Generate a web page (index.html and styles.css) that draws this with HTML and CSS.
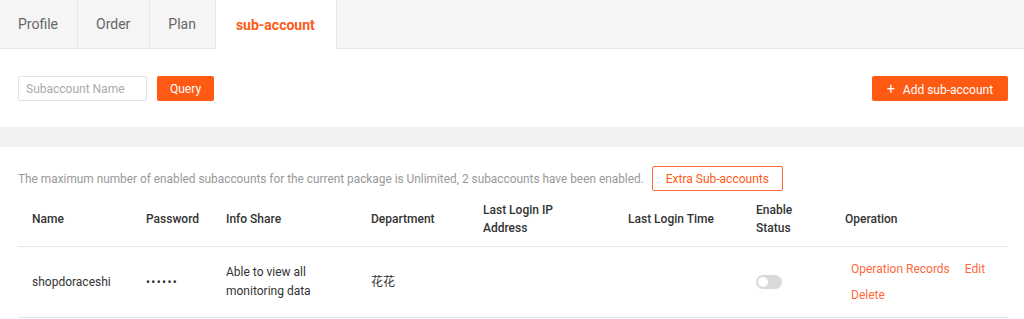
FILE: index.html
```html
<!DOCTYPE html>
<html lang="en">
<head>
    <meta charset="UTF-8">
    <meta name="viewport" content="width=device-width, initial-scale=1.0">
    <title>Sub-account</title>
    <link rel="stylesheet" href="styles.css">
</head>
<body>
    <div class="tabs">
        <div class="tab">Profile</div>
        <div class="tab">Order</div>
        <div class="tab">Plan</div>
        <div class="tab active">sub-account</div>
    </div>

    <div class="toolbar">
        <div class="search">
            <input type="text" placeholder="Subaccount Name">
            <button class="btn">Query</button>
        </div>
        <button class="btn add"><span class="plus">+</span> Add sub-account</button>
    </div>

    <div class="divider"></div>

    <div class="content">
        <div class="notice">
            <span>The maximum number of enabled subaccounts for the current package is Unlimited, 2 subaccounts have been enabled.</span>
            <button class="btn-outline">Extra Sub-accounts</button>
        </div>

        <table class="list">
            <colgroup>
                <col style="width:114px">
                <col style="width:80px">
                <col style="width:145px">
                <col style="width:112px">
                <col style="width:145px">
                <col style="width:128px">
                <col style="width:89px">
                <col>
            </colgroup>
            <thead>
                <tr>
                    <th>Name</th>
                    <th>Password</th>
                    <th>Info Share</th>
                    <th>Department</th>
                    <th>Last Login IP<br>Address</th>
                    <th>Last Login Time</th>
                    <th>Enable<br>Status</th>
                    <th>Operation</th>
                </tr>
            </thead>
            <tbody>
                <tr>
                    <td>shopdoraceshi</td>
                    <td class="dots">••••••</td>
                    <td>Able to view all<br>monitoring data</td>
                    <td>花花</td>
                    <td></td>
                    <td></td>
                    <td><span class="switch"></span></td>
                    <td class="ops">
                        <div class="ops-line"><a href="#">Operation Records</a><a href="#">Edit</a></div>
                        <div class="ops-line"><a href="#">Delete</a></div>
                    </td>
                </tr>
            </tbody>
        </table>
    </div>
</body>
</html>
```

FILE: styles.css
```css
body {
    margin: 0;
    font-family: Roboto, "Noto Sans CJK SC", sans-serif;
    color: #333;
    background-color: #fff;
}
.tabs {
    display: flex;
    height: 48px;
    background-color: #f5f5f5;
    border-bottom: 1px solid #e6e6e6;
}
.tab {
    display: flex;
    align-items: center;
    padding: 0 19px 0 18px;
    font-size: 14px;
    color: #666;
    border-right: 1px solid #e6e6e6;
}
.tab.active {
    padding: 0 21px 0 20px;
    background-color: #fff;
    color: #ff5a14;
    font-weight: 700;
    margin-bottom: -1px;
}
.toolbar {
    display: flex;
    justify-content: space-between;
    align-items: center;
    padding: 27px 16px 26px 18px;
}
.search {
    display: flex;
    gap: 10px;
}
.search input {
    width: 129px;
    height: 25px;
    box-sizing: border-box;
    padding: 0 7px;
    border: 1px solid #e3e3e3;
    border-radius: 2px;
    font-family: inherit;
    font-size: 12px;
    outline: none;
}
.search input::placeholder {
    color: #aaa;
}
.btn {
    height: 25px;
    padding: 0 13px;
    border: none;
    border-radius: 2px;
    background-color: #ff5a14;
    color: #fff;
    font-family: inherit;
    font-size: 12px;
    cursor: pointer;
}
.btn.add {
    width: 136px;
    padding: 0;
}
.btn .plus {
    font-size: 14px;
    margin-right: 5px;
}
.divider {
    height: 20px;
    background-color: #f2f2f2;
}
.content {
    padding: 19px 16px 0 18px;
}
.notice {
    display: flex;
    align-items: center;
    gap: 8px;
    font-size: 11.85px;
    color: #999;
}
.btn-outline {
    height: 25px;
    padding: 0 13px;
    border: 1px solid #ff6a3d;
    border-radius: 2px;
    background-color: #fff;
    color: #ff5a14;
    font-family: inherit;
    font-size: 12px;
    cursor: pointer;
}
.list {
    width: 100%;
    table-layout: fixed;
    border-collapse: collapse;
    font-size: 12px;
}
.list th {
    height: 55px;
    padding: 0 0 0 14px;
    text-align: left;
    font-weight: 500;
    line-height: 18px;
    color: #333;
    border-bottom: 1px solid #e6e6e6;
}
.list td {
    height: 70px;
    padding: 0 0 0 14px;
    line-height: 19px;
    border-bottom: 1px solid #e6e6e6;
}
.list td.dots {
    letter-spacing: 1.3px;
}
.switch {
    display: inline-block;
    position: relative;
    width: 26px;
    height: 14px;
    border-radius: 7px;
    background-color: #d9d9d9;
    vertical-align: middle;
}
.switch::after {
    content: "";
    position: absolute;
    left: 2px;
    top: 2px;
    width: 10px;
    height: 10px;
    border-radius: 50%;
    background-color: #fff;
}
.ops-line {
    display: flex;
    gap: 15px;
    padding-left: 6px;
    line-height: 26px;
    white-space: nowrap;
}
.ops a {
    color: #ff6a3d;
    text-decoration: none;
}
```
